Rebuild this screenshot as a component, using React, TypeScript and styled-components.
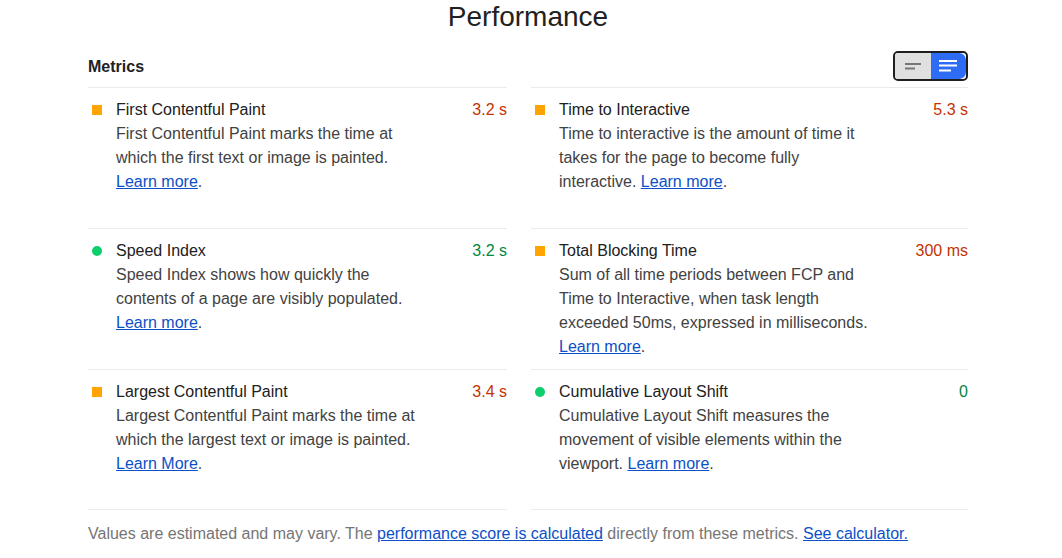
import React from 'react';
import styled, { createGlobalStyle } from 'styled-components';

type Rating = 'average' | 'pass';

interface Metric {
  title: string;
  value: string;
  rating: Rating;
  description: string;
  link: string;
}

const metrics: Metric[] = [
  {
    title: 'First Contentful Paint',
    value: '3.2 s',
    rating: 'average',
    description: 'First Contentful Paint marks the time at which the first text or image is painted.',
    link: 'Learn more',
  },
  {
    title: 'Time to Interactive',
    value: '5.3 s',
    rating: 'average',
    description: 'Time to interactive is the amount of time it takes for the page to become fully interactive.',
    link: 'Learn more',
  },
  {
    title: 'Speed Index',
    value: '3.2 s',
    rating: 'pass',
    description: 'Speed Index shows how quickly the contents of a page are visibly populated.',
    link: 'Learn more',
  },
  {
    title: 'Total Blocking Time',
    value: '300 ms',
    rating: 'average',
    description:
      'Sum of all time periods between FCP and Time to Interactive, when task length exceeded 50ms, expressed in milliseconds.',
    link: 'Learn more',
  },
  {
    title: 'Largest Contentful Paint',
    value: '3.4 s',
    rating: 'average',
    description: 'Largest Contentful Paint marks the time at which the largest text or image is painted.',
    link: 'Learn More',
  },
  {
    title: 'Cumulative Layout Shift',
    value: '0',
    rating: 'pass',
    description: 'Cumulative Layout Shift measures the movement of visible elements within the viewport.',
    link: 'Learn more',
  },
];

const GlobalStyle = createGlobalStyle`
  body {
    margin: 0;
    background: #ffffff;
    font-family: "Liberation Sans", Arial, sans-serif;
    color: #212121;
  }
`;

const Page = styled.div`
  width: 880px;
  margin-left: 88px;
  padding-top: 1px;
`;

const Heading = styled.h1`
  margin: 0;
  font-size: 28px;
  font-weight: normal;
  line-height: 32px;
  text-align: center;
  color: #212121;
`;

const Header = styled.div`
  display: flex;
  align-items: center;
  justify-content: space-between;
  height: 30px;
  margin-top: 18px;
  margin-bottom: 6px;
`;

const SectionTitle = styled.h2`
  margin: 0;
  padding-top: 2px;
  font-size: 16px;
  font-weight: bold;
  color: #212121;
`;

const Toggle = styled.div`
  display: flex;
  width: 75px;
  height: 30px;
  box-sizing: border-box;
  border: 2px solid #1e1e1e;
  border-radius: 5px;
  overflow: hidden;
  background: #ffffff;
`;

const ToggleButton = styled.button<{ $active?: boolean }>`
  flex: 1;
  display: flex;
  align-items: center;
  justify-content: center;
  padding: 0;
  border: none;
  background: ${(p) => (p.$active ? '#2f6cf6' : '#e0e0e0')};
  border-radius: ${(p) => (p.$active ? '0 7px 7px 0' : '0')};
`;

const Grid = styled.div`
  display: grid;
  grid-template-columns: 419px 437px;
  column-gap: 24px;
  grid-auto-rows: 141px;
`;

const Item = styled.div`
  border-top: 1px solid #ebebeb;
  padding-top: 10px;
  box-sizing: border-box;

  &:nth-last-child(-n + 2) {
    border-bottom: 1px solid #ebebeb;
  }
`;

const Row = styled.div`
  display: grid;
  grid-template-columns: 28px 1fr auto;
  align-items: center;
  font-size: 16px;
  line-height: 24px;
`;

const Square = styled.span`
  width: 10px;
  height: 10px;
  margin-left: 4px;
  background: #ffa400;
`;

const Dot = styled.span`
  width: 10px;
  height: 10px;
  margin-left: 4px;
  border-radius: 50%;
  background: #0cce6b;
`;

const Title = styled.span`
  color: #212121;
`;

const Value = styled.span<{ $rating: Rating }>`
  color: ${(p) => (p.$rating === 'pass' ? '#018642' : '#c33300')};
`;

const Description = styled.div`
  margin-left: 28px;
  max-width: 312px;
  font-size: 16px;
  line-height: 24px;
  color: #424242;
`;

const Link = styled.a`
  color: #0c50c7;
  text-decoration: underline;
`;

const Footer = styled.p`
  margin: 12px 0 0;
  font-size: 16px;
  line-height: 24px;
  color: #757575;
`;

const CompactIcon = () => (
  <svg width="20" height="10" viewBox="0 0 20 10">
    <rect x="2" y="2" width="16" height="2" fill="#757575" />
    <rect x="2" y="6.5" width="10" height="2" fill="#757575" />
  </svg>
);

const ListIcon = () => (
  <svg width="20" height="14" viewBox="0 0 20 14">
    <rect x="1" y="1" width="18" height="2" fill="#ffffff" />
    <rect x="1" y="5.5" width="18" height="2" fill="#ffffff" />
    <rect x="1" y="10.5" width="12" height="2" fill="#ffffff" />
  </svg>
);

export default function App() {
  return (
    <>
      <GlobalStyle />
      <Page>
        <Heading>Performance</Heading>
        <Header>
          <SectionTitle>Metrics</SectionTitle>
          <Toggle>
            <ToggleButton aria-label="Collapse view">
              <CompactIcon />
            </ToggleButton>
            <ToggleButton $active aria-label="Expand view">
              <ListIcon />
            </ToggleButton>
          </Toggle>
        </Header>
        <Grid>
          {metrics.map((m) => (
            <Item key={m.title}>
              <Row>
                {m.rating === 'pass' ? <Dot /> : <Square />}
                <Title>{m.title}</Title>
                <Value $rating={m.rating}>{m.value}</Value>
              </Row>
              <Description>
                {m.description} <Link href="#">{m.link}</Link>.
              </Description>
            </Item>
          ))}
        </Grid>
        <Footer>
          Values are estimated and may vary. The <Link href="#">performance score is calculated</Link> directly
          from these metrics. <Link href="#">See calculator.</Link>
        </Footer>
      </Page>
    </>
  );
}
